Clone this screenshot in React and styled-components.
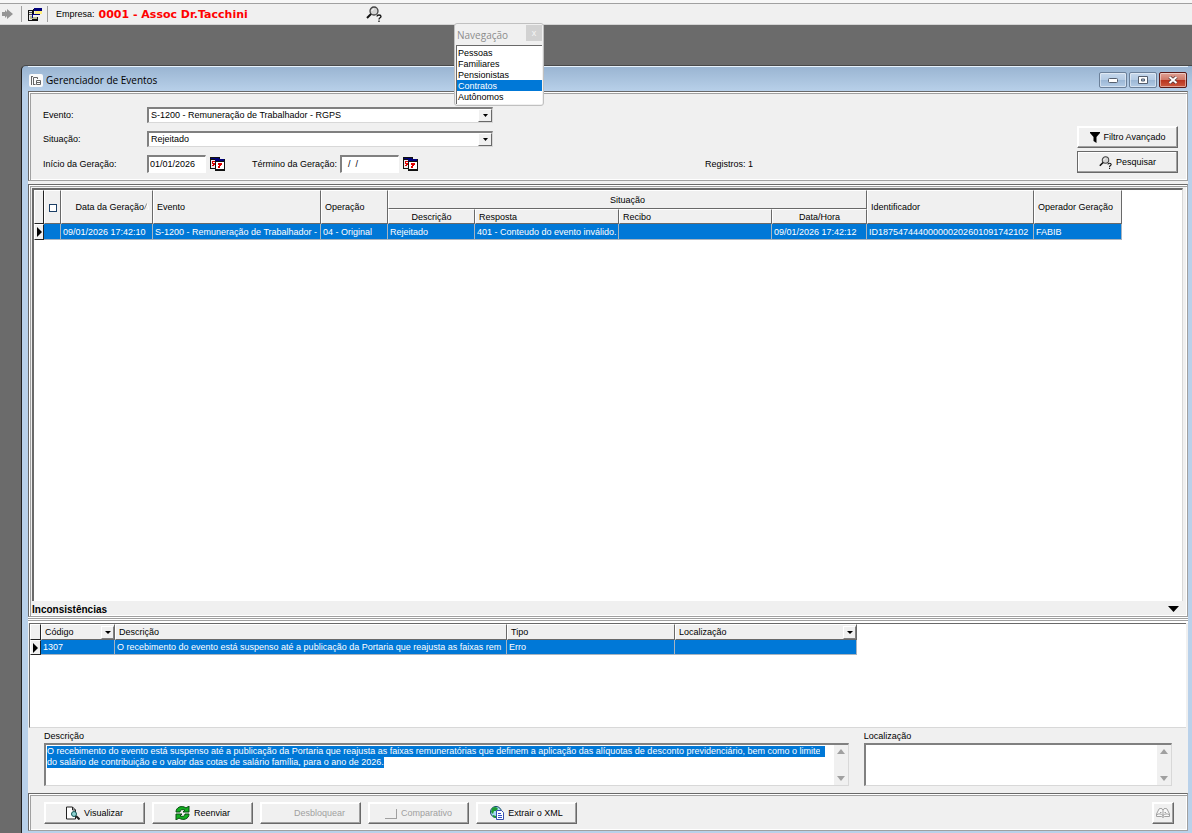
import React, { useEffect, useRef, useState } from 'react'
import styled, { createGlobalStyle } from 'styled-components'

const GlobalStyle = createGlobalStyle`
  * {
    box-sizing: border-box;
  }

  body {
    margin: 0;
    background-color: #6b6b6b;
    color: #000;
    font-family: 'Liberation Sans', Arial, sans-serif;
    font-size: 9px;
    line-height: 11px;
  }

  button, input, select, textarea {
    font: inherit;
    color: inherit;
    margin: 0;
  }
`;

const Desktop = styled.div`
  position: relative;
  min-height: 100vh;
  display: flex;
  flex-direction: column;
`;

const Toolbar = styled.header`
  height: 25px;
  padding-top: 4px;
  display: flex;
  align-items: center;
  background: linear-gradient(#f7f7f7 3px, #a0a0a0 3px, #a0a0a0 4px, #f0f0f0 4px);
  border-bottom: 1px solid #d4d4d4;
`;

const Separator = styled.span`
  width: 1px;
  height: 16px;
  margin: 0 ${props => props.$after}px 0 ${props => props.$before}px;
  background-color: #a0a0a0;
`;

const IconButton = styled.button`
  display: flex;
  padding: 0;
  border: none;
  background: none;
`;

const Company = styled.strong`
  margin-left: 4px;
  flex: 0 0 267px;
  color: #f00;
  font-family: 'DejaVu Sans', sans-serif;
  font-size: 11px;
`;

const Window = styled.main`
  flex: 1;
  margin: 40px 0 0 21px;
  padding: 0 4px 2px 6px;
  display: flex;
  flex-direction: column;
  border-left: 1px solid #222;
  border-top: 1px solid #4a4a4a;
  border-top-left-radius: 5px;
  background: linear-gradient(#99b4d1, #b9d1ea 26px);
`;

const TitleBar = styled.div`
  height: 25px;
  padding: 2px 1px 0 1px;
  display: flex;
  align-items: center;
  border-top: 1px solid #e8f2fc;
`;

const WindowTitle = styled.h1`
  flex: 1;
  margin: 0 0 0 3px;
  font-family: 'Open Sans', sans-serif;
  font-size: 10px;
  font-weight: normal;
  line-height: 14px;
`;

const WindowButton = styled.button`
  width: 28px;
  height: 16px;
  margin-left: 2px;
  padding: 0;
  display: flex;
  align-items: center;
  justify-content: center;
  border: 1px solid ${props => props.$close ? '#5b1a17' : '#6b8099'};
  border-radius: 2px;
  background: ${props => props.$close
    ? 'linear-gradient(#e0a296, #cf7766 50%, #b8311c 50%, #cc5a40)'
    : 'linear-gradient(#c6d8ec, #b4cbe4 50%, #9ab6d4 50%, #b4cce6)'};
  box-shadow: inset 0 0 0 1px rgba(255, 255, 255, .45);
`;

const Client = styled.div`
  flex: 1;
  display: flex;
  flex-direction: column;
  background-color: #f0f0f0;
`;

const Bevel = styled.section`
  border: 1px solid #696969;
  border-right-color: #a0a0a0;
  border-bottom-color: #a0a0a0;
  box-shadow: inset 1px 1px 0 #fff, inset 2px 2px 0 #a0a0a0, inset -1px -1px 0 #fff;
`;

const FilterPanel = styled(Bevel)`
  display: flex;
  justify-content: space-between;
  padding: 15px 9px 7px 14px;
  margin-bottom: 3px;
`;

const Fields = styled.form`
  display: flex;
  flex-direction: column;
  gap: 8px;
`;

const FieldRow = styled.div`
  display: flex;
  align-items: center;
`;

const Label = styled.label`
  width: ${props => props.$width}px;
  padding-top: 1px;
  white-space: nowrap;
`;

const SelectBox = styled.div`
  width: 346px;
  height: 16px;
  display: flex;
  border: 1px solid #d8d8d8;
  border-top: 2px solid #808080;
  border-left: 2px solid #808080;
  background-color: #fff;
`;

const Select = styled.select`
  flex: 1;
  appearance: none;
  padding: 0 2px;
  border: none;
  background: none;
  outline: none;
`;

const Arrow = styled.span`
  width: 14px;
  display: flex;
  align-items: center;
  justify-content: center;
  border: 1px solid #fff;
  border-right-color: #696969;
  border-bottom-color: #696969;
  background-color: #f0f0f0;
  pointer-events: none;
`;

const DateInput = styled.input`
  width: 59px;
  height: 18px;
  padding: 0 1px 1px;
  border: 1px solid #fff;
  border-top: 2px solid #808080;
  border-left: 2px solid #808080;
  background-color: #fff;
  white-space: pre;
`;

const CalendarButton = styled(IconButton)`
  margin: 0 27px 0 4px;
`;

const Count = styled.span`
  margin-left: 260px;
  padding-top: 1px;
`;

const Actions = styled.div`
  display: flex;
  flex-direction: column;
  justify-content: flex-end;
  gap: 3px;
`;

const Button = styled.button`
  width: ${props => props.$width || 101}px;
  height: 22px;
  padding: 1px 0 0;
  display: flex;
  align-items: center;
  justify-content: center;
  gap: 4px;
  border: 1px solid ${props => props.$framed ? '#696969' : '#fff'};
  border-right: 1px solid #696969;
  border-bottom: 1px solid #696969;
  background-color: #f0f0f0;
  box-shadow: inset -1px -1px 0 #a0a0a0, inset 1px 1px 0 #fff;
  white-space: nowrap;

  &:disabled {
    color: #a0a0a0;
  }
`;

const BlankIcon = styled.span`
  width: 14px;
`;

const EventsPanel = styled(Bevel)`
  flex: 1;
  padding: 3px 4px 0 3px;
  display: flex;
  flex-direction: column;
`;

const EventsArea = styled.div`
  flex: 1;
  overflow: hidden;
  border-top: 2px solid #696969;
  border-left: 2px solid #696969;
  border-right: 1px solid #d8d8d8;
  background-color: #fff;
`;

const Grid = styled.table`
  width: ${props => props.$width}px;
  table-layout: fixed;
  border-collapse: separate;
  border-spacing: 0;
`;

const HeadCell = styled.th`
  height: ${props => props.$height || 16}px;
  padding: 1px 3px 0;
  overflow: hidden;
  border-top: 1px solid #fff;
  border-left: 1px solid #fff;
  border-right: 1px solid #696969;
  border-bottom: 1px solid #696969;
  background-color: #f0f0f0;
  font-weight: normal;
  text-align: ${props => props.$align || 'left'};
  white-space: nowrap;
`;

const Cell = styled.td`
  height: ${props => props.$height || 16}px;
  padding: 1px 0 0 2px;
  overflow: hidden;
  border-right: 1px solid #a8b4c0;
  border-bottom: 1px solid #a8b4c0;
  background-color: #0078d7;
  color: #fff;
  white-space: nowrap;
`;

const Marker = styled.th`
  padding: 0;
  border-top: 1px solid #fff;
  border-left: 1px solid #fff;
  border-right: 1px solid #222;
  border-bottom: 1px solid #222;
  background-color: #f0f0f0;
`;

const CheckAll = styled.input`
  appearance: none;
  display: block;
  width: 8px;
  height: 8px;
  margin: 0 auto;
  border: 1px solid #1c3f66;
  background-color: #fff;
`;

const HeadFlex = styled.span`
  display: flex;
  align-items: center;
  justify-content: space-between;
`;

const FilterButton = styled.button`
  width: 13px;
  height: 13px;
  margin-right: -3px;
  padding: 0;
  display: flex;
  align-items: center;
  justify-content: center;
  border: 1px solid #fff;
  border-right-color: #808080;
  border-bottom-color: #808080;
  background-color: #f0f0f0;
`;

const SectionBar = styled.div`
  height: 15px;
  display: flex;
  align-items: center;
  justify-content: space-between;
  padding-right: 4px;
`;

const SectionTitle = styled.h2`
  margin: 0;
  padding-top: 1px;
  font-size: 10px;
  font-weight: bold;
`;

const Splitter = styled.div`
  height: 6px;
  border-top: 1px solid #fff;
  border-bottom: 2px solid #fff;
  background: linear-gradient(#a0a0a0 1px, #fff 1px, #fff 2px, #a0a0a0 2px);
`;

const IssuesArea = styled.div`
  height: 105px;
  margin-left: 1px;
  margin-right: 2px;
  overflow: hidden;
  border-top: 1px solid #696969;
  border-left: 1px solid #696969;
  border-bottom: 1px solid #d8d8d8;
  background-color: #fff;
`;

const IssueHead = styled(HeadCell)`
  padding-top: 0;
`;

const IssueCell = styled(Cell)`
  height: 15px;
  padding-top: 0;
`;

const Details = styled.div`
  display: grid;
  grid-template-columns: minmax(0, 804fr) minmax(0, 308fr);
  gap: 15px;
  padding: 3px 16px 7px 16px;
`;

const DetailField = styled.div`
  display: flex;
  flex-direction: column;
`;

const DetailLabel = styled.label`
  height: 12px;
  line-height: 10px;
`;

const MemoBox = styled.div`
  height: 43px;
  display: flex;
  border: 1px solid #d8d8d8;
  border-top: 2px solid #808080;
  border-left: 2px solid #808080;
  background-color: #fff;
`;

const Memo = styled.textarea`
  flex: 1;
  min-width: 0;
  padding: 1px 4px 0 1px;
  border: none;
  outline: none;
  resize: none;
  overflow: hidden;
  background: none;

  &::selection {
    background-color: #0078d7;
    color: #fff;
  }
`;

const ScrollTrack = styled.div`
  width: 14px;
  padding: 4px 0;
  display: flex;
  flex-direction: column;
  align-items: center;
  justify-content: space-between;
  background-color: #f0f0f0;
`;

const Footer = styled(Bevel)`
  height: 38px;
  padding: 3px 13px 2px 15px;
  display: flex;
  align-items: center;
  gap: 7px;
`;

const Spacer = styled.span`
  flex: 1;
`;

const Palette = styled.aside`
  position: absolute;
  left: 454px;
  top: 23px;
  width: 90px;
  padding: 0 1px 1px;
  border: 1px solid #c0c0c0;
  border-radius: 3px;
  background-color: #f0f0f0;
`;

const PaletteHead = styled.div`
  height: 21px;
  display: flex;
  align-items: flex-start;
  justify-content: space-between;
`;

const PaletteTitle = styled.h2`
  margin: 5px 0 0 1px;
  color: #8c8c8c;
  font-family: 'Open Sans', sans-serif;
  font-size: 10px;
  font-weight: normal;
  line-height: 12px;
`;

const PaletteClose = styled.button`
  width: 16px;
  height: 16px;
  margin-top: 1px;
  padding: 0;
  border: none;
  background-color: #d2d2d2;
  color: #f5f5f5;
  line-height: 12px;
`;

const PaletteList = styled.ul`
  margin: 0;
  padding: 1px 0 2px;
  list-style: none;
  border-top: 1px solid #696969;
  border-left: 1px solid #696969;
  background-color: #fff;
`;

const PaletteItem = styled.button`
  display: block;
  width: 100%;
  height: 11px;
  padding: 1px 0 0 1px;
  border: none;
  background-color: ${props => props.$active ? '#0078d7' : '#fff'};
  color: ${props => props.$active ? '#fff' : '#000'};
  line-height: 10px;
  text-align: left;
`;

const Triangle = ({ width = 6, height = 3, color = '#000', up }) => (
  <svg width={width} height={height} viewBox="0 0 10 5" preserveAspectRatio="none" aria-hidden="true">
    <path d={up ? 'M0 5h10L5 0z' : 'M0 0h10L5 5z'} fill={color} />
  </svg>
)

const SortIcon = () => (
  <svg width="5" height="7" viewBox="0 0 5 7" aria-hidden="true">
    <path d="M0 7L3 0" stroke="#909090" />
    <path d="M3 0l2 7H0" fill="none" stroke="#fff" />
  </svg>
)

const PointerSvg = styled.svg`
  display: block;
`;

const RowPointer = () => (
  <PointerSvg width="8" height="12" viewBox="0 0 8 12" aria-hidden="true">
    <path d="M2 1v10l5-5z" fill="#000" />
  </PointerSvg>
)

const ForwardIcon = () => (
  <svg width="13" height="12" viewBox="0 0 13 12" aria-hidden="true">
    <path d="M2 4h3V2l2 2V1l6 5-6 5V8l-2 2V8H2z" fill="#959595" />
  </svg>
)

const FormsIcon = () => (
  <svg width="14" height="14" viewBox="0 0 14 14" shapeRendering="crispEdges" aria-hidden="true">
    <path d="M0 3h5V2h1v8h4v4H0z" fill="#111" />
    <path d="M1 4h3v9H1z" fill="#e8e8e8" />
    <path d="M2 9h7v3H2z" fill="#b8b890" />
    <path d="M1 5h3v1H1zM1 7h3v1H1z" fill="#555" />
    <path d="M6 1h8v3H6z" fill="#00007b" />
    <path d="M7 4h7v3H7z" fill="#ffef7a" />
    <path d="M4 7h8v1H4zM4 7h1v4H4z" fill="#00007b" />
    <path d="M5 8h6v2H5z" fill="#f4f4f4" />
  </svg>
)

const LookupIcon = ({ size = 16 }) => (
  <svg width={size} height={size} viewBox="0 0 16 16" aria-hidden="true">
    <circle cx="8" cy="5" r="4" fill="#d4d4d4" stroke="#444" strokeWidth="1.300" />
    <path d="M6 5c0-1 1-2 2-2" fill="none" stroke="#fff" />
    <path d="M5 8l-4 4" stroke="#111" strokeWidth="2" />
    <path d="M11 10.500c0-2 4-2 4 0 0 1.500-2 1-2 3M13 14.500V16" fill="none" stroke="#111" strokeWidth="1.300" />
  </svg>
)

const CalendarIcon = () => (
  <svg width="15" height="14" viewBox="0 0 15 14" shapeRendering="crispEdges" aria-hidden="true">
    <path d="M0 0h10v12H0z" fill="#111" />
    <path d="M1 1h8v1H1z" fill="#00007b" />
    <path d="M1 3h5v8H1z" fill="#eee" />
    <path d="M2 4h3v1H3v1h2v2H4v1H2V8h1V7H2z" fill="#e00000" />
    <path d="M5 2h10v12H5z" fill="#111" />
    <path d="M5 2h9v2H5z" fill="#00007b" />
    <path d="M6 5h8v7H6z" fill="#fff" />
    <path d="M8 6h4v2h-1v1h-1v2H8V9h1V8H8z" fill="#e00000" />
  </svg>
)

const FunnelIcon = () => (
  <svg width="10" height="11" viewBox="0 0 10 11" aria-hidden="true">
    <path d="M0 0h10v1L6.500 5v6l-3-2V5L0 1z" fill="#000" />
  </svg>
)

const AppIcon = () => (
  <svg width="14" height="13" viewBox="0 0 14 13" aria-hidden="true">
    <rect width="14" height="13" rx="2" fill="#fafafa" />
    <path d="M2.500 2v9M2 2.500h2M4.500 11V3.500h4V5M4.500 10.500h2M7.500 6.500h4v4h-4zM7.500 8.500h4" fill="none" stroke="#666" />
  </svg>
)

const PreviewIcon = () => (
  <svg width="14" height="14" viewBox="0 0 14 14" aria-hidden="true">
    <path d="M.5 1h6l3 3v9h-9z" fill="#fff" stroke="#222" />
    <path d="M6.500 1v3h3" fill="none" stroke="#222" />
    <circle cx="8" cy="8" r="2.500" fill="#8fd4d4" stroke="#155" />
    <path d="M10 10l3.500 3.500" stroke="#222" strokeWidth="2" />
  </svg>
)

const ResendIcon = () => (
  <svg width="15" height="14" viewBox="0 0 15 14" aria-hidden="true">
    <path d="M1 6C1 1 7-1 11 2l3-2v6H8l2-2C7 3 5 4 5 6z" fill="#12b020" stroke="#064a10" />
    <path d="M14 8c0 5-6 7-10 4l-3 2V8h6l-2 2c3 1 5 0 5-2z" fill="#12b020" stroke="#064a10" />
  </svg>
)

const CompareIcon = () => (
  <svg width="12" height="11" viewBox="0 0 12 11" shapeRendering="crispEdges" aria-hidden="true">
    <path d="M11 1v9H0" fill="none" stroke="#a0a0a0" />
  </svg>
)

const XmlIcon = () => (
  <svg width="14" height="14" viewBox="0 0 14 14" aria-hidden="true">
    <circle cx="6" cy="6" r="5.500" fill="#a8dcf2" stroke="#146" />
    <path d="M2 2c3-2 5-1 6 1L6 5 4 5 3 8 1 6zM3 9l3 1v2L3 11z" fill="#1c9a34" />
    <path d="M6.500 4.500h5l2 2v7h-7z" fill="#fff" stroke="#3a4fae" />
    <path d="M8 7.500h3M8 9.500h4M8 11.500h4" stroke="#3450c8" />
  </svg>
)

const BookIcon = () => (
  <svg width="14" height="10" viewBox="0 0 14 10" aria-hidden="true">
    <path
      d="M7 2C6 0 4 0 3 1L.5 6v2.500h5L7 9.500l1.500-1h5V6L11 1C10 0 8 0 7 2zM7 2v7M1 6.500c2-1 4-1 6 1 2-2 4-2 6-1M4 4.500h1.500M8.500 4.500H10"
      fill="#f8f8f8"
      stroke="#a0a0a0"
    />
  </svg>
)

const pages = ['Pessoas', 'Familiares', 'Pensionistas', 'Contratos', 'Autônomos']

const eventColumns = [10, 17, 92, 168, 67, 87, 144, 153, 95, 167, 88]

const eventRow = [
  '',
  '09/01/2026 17:42:10',
  'S-1200 - Remuneração de Trabalhador -',
  '04 - Original',
  'Rejeitado',
  '401 - Conteudo do evento inválido.',
  '',
  '09/01/2026 17:42:12',
  'ID187547444000000202601091742102',
  'FABIB'
]

const issueColumns = [11, 74, 392, 168, 182]

const issueRow = [
  '1307',
  'O recebimento do evento está suspenso até a publicação da Portaria que reajusta as faixas rem',
  'Erro',
  ''
]

const issueText = 'O recebimento do evento está suspenso até a publicação da Portaria que reajusta as faixas remuneratórias que definem a aplicação das alíquotas de desconto previdenciário, bem como o limite do salário de contribuição e o valor das cotas de salário família, para o ano de 2026.'

function Columns({ widths }) {
  return (
    <colgroup>
      { widths.map((width, idx) => <col key={idx} style={{ width }} />) }
    </colgroup>
  )
}

function Navigation() {
  const [active, setActive] = useState('Contratos')

  return (
    <Palette>
      <PaletteHead>
        <PaletteTitle>Navegação</PaletteTitle>
        <PaletteClose aria-label="Fechar navegação">x</PaletteClose>
      </PaletteHead>
      <PaletteList>
        { pages.map(page => (
          <li key={page}>
            <PaletteItem $active={page === active} onClick={() => setActive(page)}>{page}</PaletteItem>
          </li>
        ))}
      </PaletteList>
    </Palette>
  )
}

function Filters() {
  return (
    <FilterPanel>
      <Fields>
        <FieldRow>
          <Label $width={104} htmlFor="evento">Evento:</Label>
          <SelectBox>
            <Select id="evento">
              <option>S-1200 - Remuneração de Trabalhador - RGPS</option>
            </Select>
            <Arrow><Triangle width={5} /></Arrow>
          </SelectBox>
        </FieldRow>
        <FieldRow>
          <Label $width={104} htmlFor="situacao">Situação:</Label>
          <SelectBox>
            <Select id="situacao">
              <option>Rejeitado</option>
            </Select>
            <Arrow><Triangle width={5} /></Arrow>
          </SelectBox>
        </FieldRow>
        <FieldRow>
          <Label $width={104} htmlFor="inicio">Início da Geração:</Label>
          <DateInput id="inicio" defaultValue="01/01/2026" />
          <CalendarButton type="button" aria-label="Escolher início"><CalendarIcon /></CalendarButton>
          <Label $width={88} htmlFor="termino">Término da Geração:</Label>
          <DateInput id="termino" defaultValue="  /  /" />
          <CalendarButton type="button" aria-label="Escolher término"><CalendarIcon /></CalendarButton>
          <Count>Registros: 1</Count>
        </FieldRow>
      </Fields>
      <Actions>
        <Button><FunnelIcon />Filtro Avançado</Button>
        <Button $framed><LookupIcon size={13} />Pesquisar</Button>
      </Actions>
    </FilterPanel>
  )
}

function Events() {
  return (
    <EventsPanel>
      <EventsArea>
        <Grid $width={1088}>
          <Columns widths={eventColumns} />
          <thead>
            <tr>
              <Marker rowSpan={2} />
              <HeadCell rowSpan={2}><CheckAll type="checkbox" aria-label="Marcar todos" /></HeadCell>
              <HeadCell rowSpan={2} $align="right">Data da Geração<SortIcon /></HeadCell>
              <HeadCell rowSpan={2}>Evento</HeadCell>
              <HeadCell rowSpan={2}>Operação</HeadCell>
              <HeadCell colSpan={4} $height={19} $align="center">Situação</HeadCell>
              <HeadCell rowSpan={2}>Identificador</HeadCell>
              <HeadCell rowSpan={2}>Operador Geração</HeadCell>
            </tr>
            <tr>
              <HeadCell $height={15} $align="center">Descrição</HeadCell>
              <HeadCell $height={15}>Resposta</HeadCell>
              <HeadCell $height={15}>Recibo</HeadCell>
              <HeadCell $height={15} $align="center">Data/Hora</HeadCell>
            </tr>
          </thead>
          <tbody>
            <tr>
              <Marker><RowPointer /></Marker>
              { eventRow.map((value, idx) => <Cell key={idx}>{value}</Cell>) }
            </tr>
          </tbody>
        </Grid>
      </EventsArea>
      <SectionBar>
        <SectionTitle>Inconsistências</SectionTitle>
        <IconButton aria-label="Recolher"><Triangle width={11} height={6} /></IconButton>
      </SectionBar>
    </EventsPanel>
  )
}

function Issues() {
  return (
    <IssuesArea>
      <Grid $width={827}>
        <Columns widths={issueColumns} />
        <thead>
          <tr>
            <Marker />
            <IssueHead>
              <HeadFlex>Código<FilterButton aria-label="Filtrar código"><Triangle /></FilterButton></HeadFlex>
            </IssueHead>
            <IssueHead>Descrição</IssueHead>
            <IssueHead>Tipo</IssueHead>
            <IssueHead>
              <HeadFlex>Localização<FilterButton aria-label="Filtrar localização"><Triangle /></FilterButton></HeadFlex>
            </IssueHead>
          </tr>
        </thead>
        <tbody>
          <tr>
            <Marker><RowPointer /></Marker>
            { issueRow.map((value, idx) => <IssueCell key={idx}>{value}</IssueCell>) }
          </tr>
        </tbody>
      </Grid>
    </IssuesArea>
  )
}

function MemoField({ id, label, value, selected }) {
  const memo = useRef(null)

  useEffect(() => {
    if(selected) {
      memo.current.focus()
      memo.current.select()
    }
  }, [selected])

  return (
    <DetailField>
      <DetailLabel htmlFor={id}>{label}</DetailLabel>
      <MemoBox>
        <Memo id={id} ref={memo} defaultValue={value} readOnly spellCheck={false} />
        <ScrollTrack>
          <Triangle width={8} height={5} color="#a0a0a0" up />
          <Triangle width={8} height={5} color="#a0a0a0" />
        </ScrollTrack>
      </MemoBox>
    </DetailField>
  )
}

function App() {
  return (
    <Desktop>
      <GlobalStyle />
      <Toolbar>
        <IconButton aria-label="Avançar"><ForwardIcon /></IconButton>
        <Separator $before={8} $after={6} />
        <IconButton aria-label="Formulários"><FormsIcon /></IconButton>
        <Separator $before={5} $after={8} />
        <span>Empresa:</span>
        <Company>0001 - Assoc Dr.Tacchini</Company>
        <IconButton aria-label="Localizar"><LookupIcon /></IconButton>
      </Toolbar>
      <Window>
        <TitleBar>
          <AppIcon />
          <WindowTitle>Gerenciador de Eventos</WindowTitle>
          <WindowButton aria-label="Minimizar">
            <svg width="10" height="5" viewBox="0 0 10 5"><rect x=".5" y=".5" width="9" height="4" rx="1" fill="#fff" stroke="#555f6e" /></svg>
          </WindowButton>
          <WindowButton aria-label="Maximizar">
            <svg width="10" height="8" viewBox="0 0 10 8"><path d="M.5 .5h9v7h-9zM3.500 3h3v2h-3z" fill="#fff" fillRule="evenodd" stroke="#555f6e" /></svg>
          </WindowButton>
          <WindowButton $close aria-label="Fechar">
            <svg width="10" height="8" viewBox="0 0 10 8">
              <path d="M1.500 1l7 6M8.500 1l-7 6" stroke="#5a3a3a" strokeWidth="3.500" />
              <path d="M1.500 1l7 6M8.500 1l-7 6" stroke="#fff" strokeWidth="2" />
            </svg>
          </WindowButton>
        </TitleBar>
        <Client>
          <Filters />
          <Events />
          <Splitter />
          <Issues />
          <Details>
            <MemoField id="descricao" label="Descrição" value={issueText} selected />
            <MemoField id="localizacao" label="Localização" value="" />
          </Details>
          <Footer>
            <Button><PreviewIcon />Visualizar</Button>
            <Button><ResendIcon />Reenviar</Button>
            <Button disabled><BlankIcon />Desbloquear</Button>
            <Button disabled><CompareIcon />Comparativo</Button>
            <Button><XmlIcon />Extrair o XML</Button>
            <Spacer />
            <Button $width={22} disabled aria-label="Ajuda"><BookIcon /></Button>
          </Footer>
        </Client>
      </Window>
      <Navigation />
    </Desktop>
  )
}

export default App
